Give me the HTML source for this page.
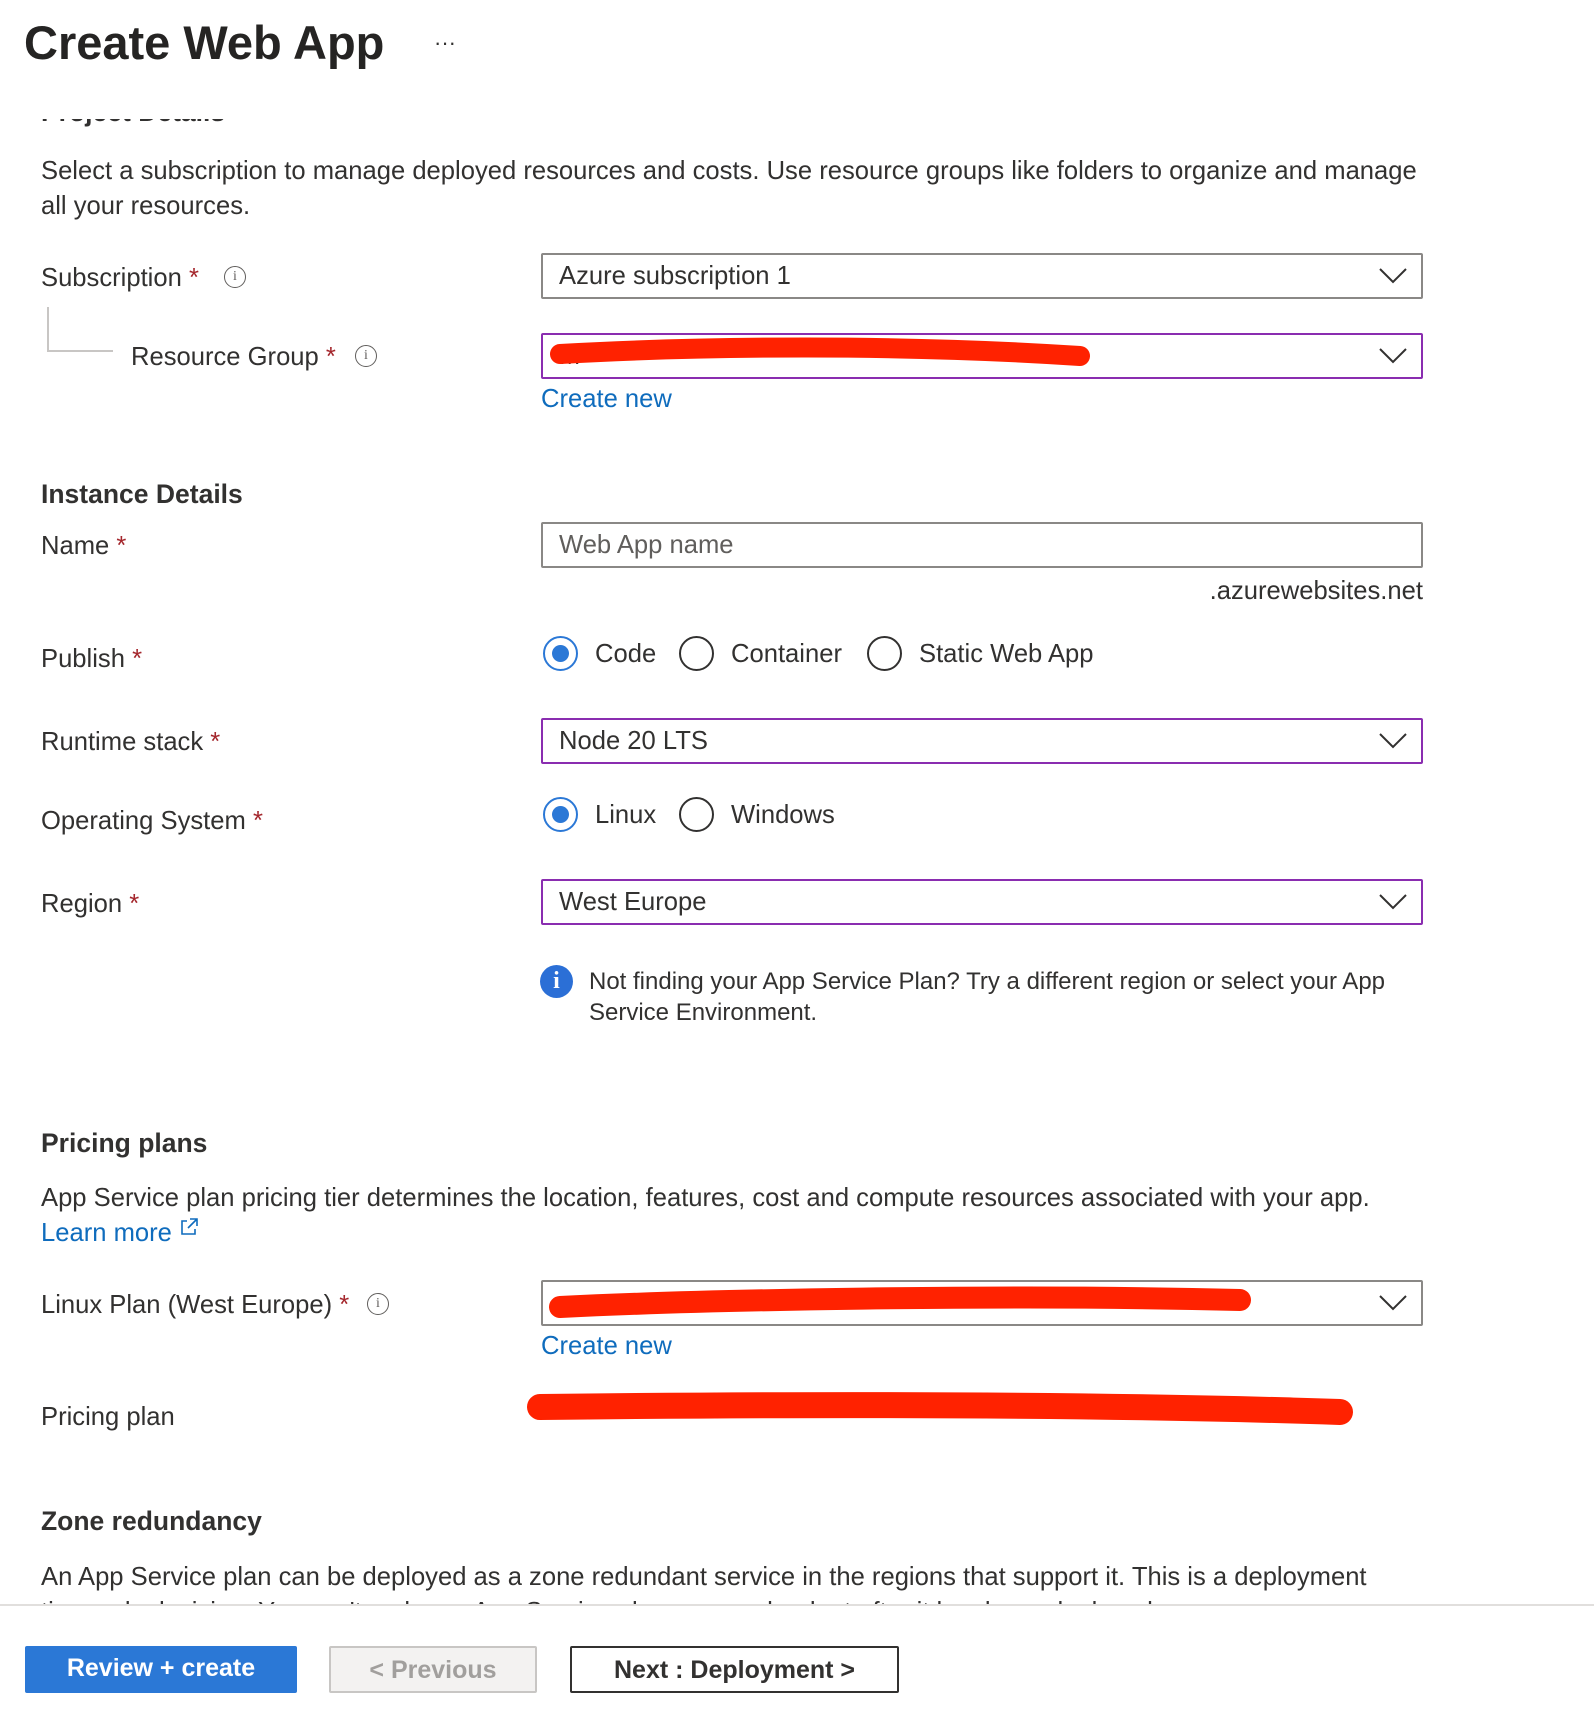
<!DOCTYPE html>
<html><head><meta charset="utf-8"><style>
*{margin:0;padding:0;box-sizing:border-box}
body{width:1594px;height:1734px;background:#fff;position:relative;overflow:hidden;font-family:"Liberation Sans",sans-serif;color:#323130;font-size:25.6px}
.t{position:absolute;height:34px;line-height:34px;white-space:nowrap}
.req{color:#a4262c}
.h{font-weight:bold;font-size:26.5px}
.dd{position:absolute;left:541px;width:882px;height:46px;border:2px solid #8a8886;border-radius:2px}
.dd.p{border-color:#8a2db0}
.dd span{position:absolute;left:16px;top:0;line-height:42px}
.chev{position:absolute;right:14px;top:12px}
.info{position:absolute;width:22px;height:22px;border:1.5px solid #605e5c;border-radius:50%;font-size:14px;line-height:19px;text-align:center;color:#605e5c;font-family:"Liberation Serif",serif}
.link{color:#0f6cbd}
.rad{position:absolute;width:35px;height:35px;border:2px solid #323130;border-radius:50%}
.rad.on{border-color:#2b78d6}
.rad.on::after{content:"";position:absolute;left:7px;top:7px;width:17px;height:17px;border-radius:50%;background:#2b78d6}
.btn{position:absolute;top:1646px;height:47px;line-height:45px;text-align:center;font-size:25px;font-weight:bold;border-radius:2px}
</style></head><body>
<div class="t" style="left:24px;top:18px;height:50px;line-height:50px;font-size:47px;font-weight:bold;color:#252423">Create Web App</div>
<div class="t" style="left:434px;top:26px;font-size:22px">···</div>
<div style="position:absolute;left:0;top:119px;width:1594px;height:20px;overflow:hidden">
 <div class="t h" style="left:41px;top:-24px">Project Details</div>
</div>
<div class="t" style="left:41px;top:154px">Select a subscription to manage deployed resources and costs. Use resource groups like folders to organize and manage</div>
<div class="t" style="left:41px;top:189px">all your resources.</div>

<div class="t" style="left:41px;top:261px">Subscription <span class="req">*</span></div>
<div class="info" style="left:224px;top:266px">i</div>
<div class="dd" style="top:253px"><span>Azure subscription 1</span><svg class="chev" width="28" height="18" viewBox="0 0 28 18"><path d="M1 2 L14 15 L27 2" fill="none" stroke="#323130" stroke-width="2"/></svg></div>

<div style="position:absolute;left:47px;top:307px;width:66px;height:45px;border-left:2px solid #c8c6c4;border-bottom:2px solid #c8c6c4"></div>
<div class="t" style="left:131px;top:340px">Resource Group <span class="req">*</span></div>
<div class="info" style="left:355px;top:345px">i</div>
<div class="dd p" style="top:333px"><span>M</span><svg class="chev" width="28" height="18" viewBox="0 0 28 18"><path d="M1 2 L14 15 L27 2" fill="none" stroke="#323130" stroke-width="2"/></svg></div>
<svg style="position:absolute;left:0;top:0" width="1594" height="1734"><path d="M560 354 C700 346 900 344 1080 356" stroke="#ff2200" stroke-width="20" fill="none" stroke-linecap="round"/>
<path d="M560 1307 C700 1300 1000 1294 1240 1300" stroke="#ff2200" stroke-width="22" fill="none" stroke-linecap="round"/>
<path d="M540 1407 C800 1404 1100 1404 1340 1412" stroke="#ff2200" stroke-width="26" fill="none" stroke-linecap="round"/></svg>
<div class="t link" style="left:541px;top:382px">Create new</div>

<div class="t h" style="left:41px;top:477px">Instance Details</div>
<div class="t" style="left:41px;top:529px">Name <span class="req">*</span></div>
<div class="dd" style="top:522px"><span style="color:#605e5c">Web App name</span></div>
<div class="t" style="right:171px;top:574px">.azurewebsites.net</div>

<div class="t" style="left:41px;top:642px">Publish <span class="req">*</span></div>
<div class="rad on" style="left:543px;top:636px"></div><div class="t" style="left:595px;top:637px">Code</div>
<div class="rad" style="left:679px;top:636px"></div><div class="t" style="left:731px;top:637px">Container</div>
<div class="rad" style="left:867px;top:636px"></div><div class="t" style="left:919px;top:637px">Static Web App</div>

<div class="t" style="left:41px;top:725px">Runtime stack <span class="req">*</span></div>
<div class="dd p" style="top:718px"><span>Node 20 LTS</span><svg class="chev" width="28" height="18" viewBox="0 0 28 18"><path d="M1 2 L14 15 L27 2" fill="none" stroke="#323130" stroke-width="2"/></svg></div>

<div class="t" style="left:41px;top:804px">Operating System <span class="req">*</span></div>
<div class="rad on" style="left:543px;top:797px"></div><div class="t" style="left:595px;top:798px">Linux</div>
<div class="rad" style="left:679px;top:797px"></div><div class="t" style="left:731px;top:798px">Windows</div>

<div class="t" style="left:41px;top:887px">Region <span class="req">*</span></div>
<div class="dd p" style="top:879px"><span>West Europe</span><svg class="chev" width="28" height="18" viewBox="0 0 28 18"><path d="M1 2 L14 15 L27 2" fill="none" stroke="#323130" stroke-width="2"/></svg></div>

<div style="position:absolute;left:540px;top:965px;width:33px;height:33px;border-radius:50%;background:#2b6fd6;color:#fff;text-align:center;font-weight:bold;font-size:24px;line-height:33px;font-family:'Liberation Serif',serif">i</div>
<div class="t" style="left:589px;top:965px;font-size:24px">Not finding your App Service Plan? Try a different region or select your App</div>
<div class="t" style="left:589px;top:996px;font-size:24px">Service Environment.</div>

<div class="t h" style="left:41px;top:1126px">Pricing plans</div>
<div class="t" style="left:41px;top:1181px">App Service plan pricing tier determines the location, features, cost and compute resources associated with your app.</div>
<div class="t link" style="left:41px;top:1216px">Learn more <svg width="20" height="20" viewBox="0 0 20 20" style="vertical-align:4px"><path d="M8 4H3v13h13v-5M11 2h7v7M18 2L9 11" fill="none" stroke="#0f6cbd" stroke-width="1.6"/></svg></div>

<div class="t" style="left:41px;top:1288px">Linux Plan (West Europe) <span class="req">*</span></div>
<div class="info" style="left:367px;top:1293px">i</div>
<div class="dd" style="top:1280px"><span></span><svg class="chev" width="28" height="18" viewBox="0 0 28 18"><path d="M1 2 L14 15 L27 2" fill="none" stroke="#323130" stroke-width="2"/></svg></div>
<div class="t link" style="left:541px;top:1329px">Create new</div>
<div class="t" style="left:41px;top:1400px">Pricing plan</div>

<div class="t h" style="left:41px;top:1504px">Zone redundancy</div>
<div style="position:absolute;left:0;top:1560px;width:1594px;height:44px;overflow:hidden">
<div class="t" style="left:41px;top:0">An App Service plan can be deployed as a zone redundant service in the regions that support it. This is a deployment</div>
<div class="t" style="left:41px;top:35px">time only decision. You can't make an App Service plan zone redundant after it has been deployed</div>
</div>
<div style="position:absolute;left:0;top:1604px;width:1594px;height:2px;background:#e1dfdd"></div>

<div class="btn" style="left:25px;width:272px;background:#2b78d6;color:#fff">Review + create</div>
<div class="btn" style="left:329px;width:208px;background:#f3f2f1;border:2px solid #c8c6c4;color:#a19f9d">&lt; Previous</div>
<div class="btn" style="left:570px;width:329px;background:#fff;border:2px solid #323130;color:#323130">Next : Deployment &gt;</div>
</body></html>
